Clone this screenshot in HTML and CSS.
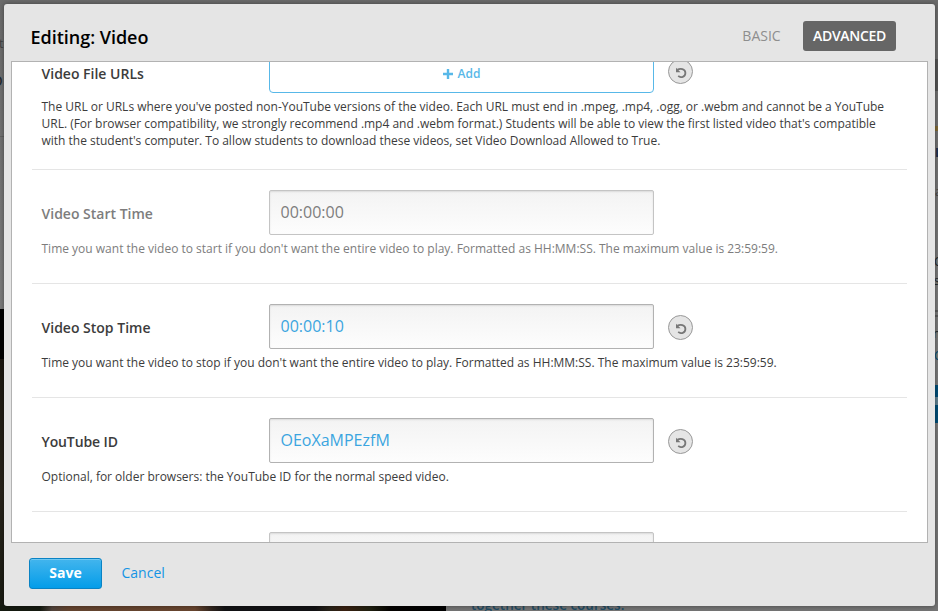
FILE: index.html
```
<!DOCTYPE html>
<html lang="en">
<head>
<meta charset="utf-8">
<title>Editing: Video</title>
<link rel="stylesheet" href="styles.css">
</head>
<body>
<svg class="symbols" width="0" height="0"><symbol id="undo" viewBox="0 0 12 12"><path d="M2.4 3.8C5 2 10.4 2.6 10.4 7C10.4 11 5.8 12.2 3.2 9.9" fill="none" stroke="#777" stroke-width="1.8"/><path d="M1 1.8v4.5h4.5z" fill="#777"/></symbol></svg>
<div class="backdrop" aria-hidden="true">
  <div class="video-edge"></div><div class="video-bottom"></div>
  <span class="bit bit-t">t</span><span class="bit bit-o">o</span><i class="line-left"></i>
  <i class="block"></i><i class="gold"></i><span class="bit bit-l">L</span><span class="bit bit-a">a</span>
  <span class="bit bit-c">C</span><span class="bit bit-s">s</span><i class="rule"></i><span class="bit bit-n">n</span><span class="bit bit-d">C</span><i class="button-edge"></i>
  <span class="bit course-text">together these courses.</span>
</div>
<main class="modal">
  <header class="modal-header">
    <h1>Editing: Video</h1>
    <nav class="modes"><a class="mode basic">BASIC</a><a class="mode active">ADVANCED</a></nav>
  </header>
  <section class="content">
    <div class="settings">
      <div class="row">
        <div class="field"><label>Video File URLs</label><button class="add"><svg width="10" height="10" viewBox="0 0 10 10"><path d="M5 0v10M0 5h10" stroke="#58b8e8" stroke-width="2.4"/></svg><span>Add</span></button><button class="reset"><svg width="12" height="12"><use href="#undo"/></svg></button></div>
        <p class="help long">The URL or URLs where you've posted non-YouTube versions of the video. Each URL must end in .mpeg, .mp4, .ogg, or .webm and cannot be a YouTube<br>URL. (For browser compatibility, we strongly recommend .mp4 and .webm format.) Students will be able to view the first listed video that's compatible<br>with the student's computer. To allow students to download these videos, set Video Download Allowed to True.</p>
      </div>
      <div class="row unset">
        <div class="field"><label>Video Start Time</label><div class="input">00:00:00</div></div>
        <p class="help">Time you want the video to start if you don't want the entire video to play. Formatted as HH:MM:SS. The maximum value is 23:59:59.</p>
      </div>
      <div class="row">
        <div class="field"><label>Video Stop Time</label><div class="input">00:00:10</div><button class="reset"><svg width="12" height="12"><use href="#undo"/></svg></button></div>
        <p class="help">Time you want the video to stop if you don't want the entire video to play. Formatted as HH:MM:SS. The maximum value is 23:59:59.</p>
      </div>
      <div class="row">
        <div class="field"><label class="tight">YouTube ID</label><div class="input">OEoXaMPEzfM</div><button class="reset"><svg width="12" height="12"><use href="#undo"/></svg></button></div>
        <p class="help long">Optional, for older browsers: the YouTube ID for the normal speed video.</p>
      </div>
      <div class="row unset"><div class="field"><label></label><div class="input"></div></div></div>
    </div>
  </section>
  <footer class="actions"><button class="save">Save</button><a class="cancel">Cancel</a></footer>
</main>
</body>
</html>
```
FILE: styles.css
```
* { box-sizing: border-box; }
body { margin: 0; width: 938px; height: 611px; overflow: hidden; position: relative; font-family: "Open Sans", sans-serif; color: #3c3c3c; background: #747474; }
button { font: inherit; padding: 0; }
.symbols { position: absolute; }
.backdrop { position: absolute; inset: 0; overflow: hidden; background: linear-gradient(#6b6b6b, #7b7b7b 50%, #747474); }
.backdrop i { position: absolute; }
.bit { position: absolute; line-height: 1; white-space: nowrap; color: #20282e; font-size: 12px; }
.video-edge { position: absolute; left: 0; top: 309px; width: 4px; height: 302px; background: linear-gradient(#000 50px, #1b1710 50px, #28231a 60%, #181a12); }
.video-bottom { position: absolute; left: 0; top: 605px; width: 446px; height: 6px; background: linear-gradient(90deg, #151a10 0 40px, #51443c 52px, #64442f 68px, #68452f 195px, #30251e 212px, #121214 225px 315px, #292319 330px, #392010 345px, #202010 370px, #050301 390px, #000); }
.bit-t { left: -1px; top: 38px; color: #424242; }
.bit-o { left: -8px; top: 70px; font-size: 18px; }
.line-left { left: 0; top: 136px; width: 4px; height: 1px; background: #606060; }
.block { left: 935px; top: 59px; width: 3px; height: 32px; background: #555; }
.gold { left: 935px; top: 126px; width: 3px; height: 5px; background: #806a35; }
.bit-l { left: 935px; top: 147px; color: #182b48; font-weight: 700; }
.bit-a { left: 935px; top: 186px; color: #444; }
.bit-c { left: 934px; top: 256px; }
.bit-s { left: 934px; top: 275px; }
.rule { left: 935px; top: 310px; width: 3px; height: 7px; border: solid #5d5d5d; border-width: 2px 0; }
.bit-n { left: 933px; top: 328px; }
.bit-d { left: 934px; top: 350px; color: #004e78; }
.button-edge { left: 935px; top: 385px; width: 3px; height: 38px; background: linear-gradient(#004d77 0 12px, #608090 12px 20px, #004d77 20px); }
.course-text { left: 471px; top: 599px; font-size: 13.5px; font-weight: 600; color: #214c65; }
.modal { position: relative; width: 931px; height: 602px; margin: 4px 0 0 4px; display: flex; flex-direction: column; background: #e5e5e5; border-radius: 3px; box-shadow: 0 0 5px rgba(0,0,0,.4); }
.modal-header { height: 57px; display: flex; justify-content: space-between; align-items: flex-start; padding: 17px 39px 0 26.5px; }
h1 { margin: 4px 0 0; font-size: 18px; line-height: 24px; font-weight: 600; color: #000; letter-spacing: -.02px; }
.modes { display: flex; gap: 13px; }
.mode { height: 30px; display: flex; align-items: center; justify-content: center; width: 93px; padding-bottom: 1px; font-size: 14px; font-weight: 400; color: #8e8e8e; }
.mode.basic { width: 57px; }
.mode.active { color: #fff; background: #666; border-radius: 3px; font-weight: 600; letter-spacing: -.3px; }
.content { height: 482px; margin: 0 7px; border: 1px solid #b2b2b2; background: #fff; overflow: hidden; }
.settings { margin: -34px 20px 0; }
.row { min-height: 114px; border-bottom: 1px solid #e5e5e5; padding: 20px 0 0 9px; }
.row:first-child { min-height: 142px; }
.field { display: grid; grid-template-columns: 228px 385px 25px; height: 45px; }
label { padding: 3px 0 0 .5px; font-size: 14px; line-height: 42px; font-weight: 600; }
.row:first-child label { padding-top: 7px; line-height: 38px; }
label.tight { letter-spacing: -.12px; }
.help { margin: 5px 0 0 .5px; font-size: 12px; line-height: 17px; white-space: nowrap; }
.help.long { letter-spacing: -.01px; }
.input { border: 1px solid #b2b2b2; border-radius: 2px; height: 45px; padding-left: 10.5px; font-size: 16px; line-height: 43px; color: #3ba5e0; background: linear-gradient(#f3f3f3, #fdfdfd); box-shadow: inset 0 1px 2px rgba(0,0,0,.1); }
.unset, .unset .input { color: #7d7d7d; }
.unset .input { border-color: #c4c4c4; }
.add { border: 1px solid #58b8e8; border-radius: 4px; background: #fff; color: #58b8e8; font-size: 12px; font-weight: 600; display: flex; align-items: center; justify-content: center; gap: 5px; padding-top: 6px; }
.reset { width: 25px; height: 25px; margin: 11px 0 0 14px; border: 1px solid #999; border-radius: 50%; background: #e5e5e5; display: flex; align-items: center; justify-content: center; padding: 1px 0 0 1px; }
.actions { height: 63px; padding: 15px 0 0 25px; display: flex; align-items: flex-start; gap: 19.5px; }
.save { width: 73px; height: 31px; padding-bottom: 2px; border: 1px solid #0a83c4; border-radius: 3px; color: #fff; font-size: 14px; font-weight: 700; background: linear-gradient(#43b5ed, #049de9); box-shadow: inset 0 1px 0 #70c8f2; }
.cancel { font-size: 14px; line-height: 30px; color: #1494e4; }
```
